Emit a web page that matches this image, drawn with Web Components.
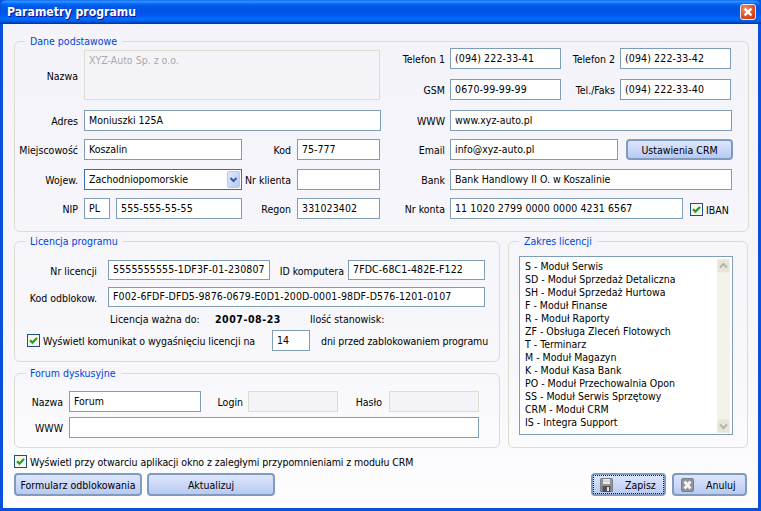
<!DOCTYPE html>
<html lang="pl"><head><meta charset="utf-8"><title>Parametry programu</title>
<style>
html,body{margin:0;padding:0;background:#0855dd}
body{font:10.5px "DejaVu Sans Condensed","DejaVu Sans",sans-serif;font-stretch:condensed;color:#000;width:761px;height:511px;overflow:hidden}
</style></head><body>
<x-app></x-app>
<script>
const FIELD_H=21;
function def(name,css,html,init){
  customElements.define(name,class extends HTMLElement{
    constructor(){super();this.attachShadow({mode:'open'});}
    connectedCallback(){
      const a=n=>this.getAttribute(n);
      this.shadowRoot.innerHTML='<style>'+css+'</style>'+(typeof html==='function'?html(a,this):html);
    }
  });
}
def('x-window',`
:host{display:flex;flex-direction:column;width:761px;height:511px;box-sizing:border-box;overflow:hidden;background:#0a50dc;border-radius:7px 7px 0 0}
.t{height:24px;flex:none;display:flex;align-items:center;justify-content:space-between;padding:0 5px 1px 7px;box-sizing:border-box;
background:linear-gradient(180deg,#0058ee 0,#3593ff 4%,#288eff 8%,#127dff 12%,#036ffc 16%,#0262ee 20%,#0057e5 28%,#0054e3 36%,#0055eb 56%,#005bf5 66%,#026afe 76%,#0062ef 86%,#0052d6 92%,#0040ab 96%,#003092 100%)}
.l{color:#fff;font:bold 12.2px "DejaVu Sans Condensed","DejaVu Sans",sans-serif;font-stretch:condensed;text-shadow:1px 1px 0 #0f1089}
.c{flex:1;margin:0 3px 3px;background:linear-gradient(180deg,#f3f3f9 0,#f6f6fb 60%,#fdfdfe 100%);padding:17px 11px 0;box-sizing:border-box;display:flex;flex-direction:column}
svg{display:block}
`,a=>`<div class="t"><span class="l">${a('caption')}</span>
<svg width="16" height="16" viewBox="0 0 16 16" aria-hidden="true"><defs><radialGradient id="r" cx=".35" cy=".3" r=".9"><stop offset="0" stop-color="#f09070"/><stop offset=".6" stop-color="#dd4c1e"/><stop offset="1" stop-color="#c23510"/></radialGradient></defs><rect x=".5" y=".5" width="15" height="15" rx="2.5" fill="url(#r)" stroke="#f5ece8"/><path d="M4.6 4.6l6.8 6.8M11.4 4.6l-6.8 6.8" stroke="#fff" stroke-width="2.3"/></svg></div><div class="c"><slot></slot></div>`);

def('x-group',`
:host{display:block;box-sizing:border-box;position:relative;border:1px solid #dbdbd0;border-radius:6px}
.lg{position:absolute;left:10px;top:-7px;padding:0 5px;line-height:13px;color:#0046d5;background:#f4f4fa;white-space:nowrap}
`,a=>`<div class="lg">${a('legend')}</div><slot></slot>`);

def('x-field',`
:host{display:flex;align-items:center;flex:none}
.lb{text-align:right;white-space:nowrap;box-sizing:border-box;flex:none;padding-top:1px}
.b{box-sizing:border-box;border:1px solid #7f9db9;background:#fff;padding:0 4px 2px 4px;display:flex;align-items:center;white-space:nowrap;overflow:hidden;flex:none}
:host([disabled]) .b{border:1px solid #dcdccf;background:#f4f4f8;color:#aaa}
:host([multi]) .b{align-items:flex-start;padding-top:3px}
:host([combo]) .b{border-color:#3c6cb4;justify-content:space-between;padding-right:1px;padding-bottom:0}
:host([combo]) span{padding-bottom:2px}
svg{display:block;flex:none}
`,a=>{
  const lw=a('lw'),g=a('gap')||6,w=a('w'),h=a('h')||FIELD_H,ls=a('ls');
  const lab=lw?`<div class="lb" style="width:${lw}px;margin-right:${g}px">${a('label')||''}</div>`:'';
  const ch=a('combo')!==null?`<svg width="13" height="17" viewBox="0 0 13 17" aria-hidden="true"><defs><linearGradient id="g" x1="0" y1="0" x2="1" y2="1"><stop offset="0" stop-color="#e3ebfd"/><stop offset="1" stop-color="#b4c8f4"/></linearGradient></defs><rect x=".5" y=".5" width="12" height="16" rx="1.5" fill="url(#g)" stroke="#b5c8ee"/><path d="M3.5 7l3 3 3-3" fill="none" stroke="#3a5a9c" stroke-width="2"/></svg>`:'';
  return lab+`<div class="b" style="width:${w}px;height:${h}px"><span${ls?` style="letter-spacing:${ls}px"`:''}>${a('value')||''}</span>${ch}</div>`;
});

def('x-check',`
:host{display:flex;align-items:center;white-space:nowrap;flex:none}
svg{display:block;flex:none;margin-right:3px}
`,a=>`<svg width="13" height="13" viewBox="0 0 13 13" aria-hidden="true"><rect x=".5" y=".5" width="12" height="12" fill="#f6f6ee" stroke="#1c5180"/><path d="M3 6.2l2.4 2.4L10 3.9" fill="none" stroke="#21a121" stroke-width="2.2"/></svg><span style="letter-spacing:${a('ls')||-0.07}px">${a('label')}</span>`);

def('x-button',`
:host{display:block;flex:none;height:23px;box-sizing:border-box;border:2px solid #7f9cbf;border-radius:4px;background:linear-gradient(180deg,#dfe6fb 0,#cbd8f8 50%,#b8c9f2 100%);position:relative}
.i{display:flex;align-items:center;justify-content:center;height:100%;white-space:nowrap;box-sizing:border-box}
:host([icon]) .i{justify-content:flex-start;padding-left:7px}
:host([focus]) .i{outline:1px dotted #222;outline-offset:-1px}
svg{display:block;margin-right:12px;flex:none}
`,a=>{
  const ic=a('icon');let s='';
  if(ic==='save')s=`<svg width="13" height="14" viewBox="0 0 13 14" aria-hidden="true"><path d="M.5 1.5a1 1 0 011-1h10a1 1 0 011 1v12H.5z" fill="#8f9296" stroke="#7c7f84"/><rect x="3" y="1" width="7" height="5" fill="#e8e8e8"/><rect x="3" y="2.5" width="7" height="1" fill="#c8c8c8"/><rect x="2.5" y="8" width="8" height="6" fill="#4e5056"/><rect x="7" y="9" width="2" height="4" fill="#e4e4e4"/></svg>`;
  if(ic==='cancel')s=`<svg width="13" height="14" viewBox="0 0 13 14" aria-hidden="true"><rect x=".5" y=".5" width="12" height="13" rx="1.5" fill="#8f9296" stroke="#7c7f84"/><path d="M3.5 3.5l6 7M9.5 3.5l-6 7" stroke="#f4f4f4" stroke-width="2.8"/></svg>`;
  return `<div class="i">${s}<span>${a('label')}</span></div>`;
});

def('x-listbox',`
:host{display:flex;box-sizing:border-box;border:1px solid #7f9db9;background:#fff}
.items{flex:1;padding:3px 0 0 5px;line-height:13px;white-space:nowrap}
.sb{width:13px;margin:2px 2px 1px 0;background:#f3f3e9;display:flex;flex-direction:column;justify-content:space-between}
svg{display:block}
`,a=>{
  const btn=d=>`<svg width="13" height="14" viewBox="0 0 13 14" aria-hidden="true"><rect x=".5" y=".5" width="12" height="13" rx="1.5" fill="#e5e5d8" stroke="#eeeee4"/><path d="${d}" fill="none" stroke="#b4b4a6" stroke-width="2"/></svg>`;
  const items=a('items').split('|').map(t=>`<div>${t}</div>`).join('');
  return `<div class="items">${items}</div><div class="sb">${btn('M3 8.5l3.5-3.5 3.5 3.5')}${btn('M3 5.5l3.5 3.5 3.5-3.5')}</div>`;
});

def('x-app',`
:host{display:block}
.sec1{width:735px;height:191px}
.g1{display:grid;grid-template-columns:380px 1fr;grid-template-rows:31px 31px 29px 30px 29px 21px;padding-top:6px}
.cell{display:flex;align-items:flex-start}
.nazwa{grid-row:1 / span 2;padding-top:2px}
.mid{display:flex;gap:8px;margin-top:9px}
.leftc{width:486px;display:flex;flex-direction:column;gap:11px;flex:none}
.lic{height:121px;padding-top:18px;box-sizing:border-box}
.row{display:flex;align-items:center}
.r2{margin-top:7px}
.info{margin-top:5px;height:14px;padding-left:95px}
.info span{display:block;flex:none}
.r4{margin-top:4px;padding-left:12px}
.forum{height:75px;padding-top:17px;box-sizing:border-box}
.zak{width:240px;height:207px;padding:14px 0 0 10px;box-sizing:border-box;flex:none}
.chk{margin-top:7px;height:13px}
.btns{margin-top:5px;display:flex}
.spacer{flex:1}
x-listbox{width:214px;height:179px}
`,()=>`<x-window caption="Parametry programu">
<x-group class="sec1" legend="Dane podstawowe"><div class="g1">
  <div class="cell nazwa"><x-field lw="63" label="Nazwa" value="XYZ-Auto Sp. z o.o." w="296" h="50" disabled multi></x-field></div>
  <div class="cell"><x-field lw="50" gap="5" label="Telefon 1" value="(094) 222-33-41" w="111" ls=".12"></x-field><x-field lw="54" gap="5" label="Telefon 2" value="(094) 222-33-42" w="111" ls=".12"></x-field></div>
  <div class="cell"><x-field lw="50" gap="5" label="GSM" value="0670-99-99-99" w="111" ls=".12"></x-field><x-field lw="54" gap="5" label="Tel./Faks" value="(094) 222-33-40" w="111" ls=".12"></x-field></div>
  <div class="cell"><x-field lw="63" label="Adres" value="Moniuszki 125A" w="297"></x-field></div>
  <div class="cell"><x-field lw="50" gap="5" label="WWW" value="www.xyz-auto.pl" w="282"></x-field></div>
  <div class="cell"><x-field lw="63" label="Miejscowość" value="Koszalin" w="158"></x-field><x-field lw="49" label="Kod" value="75-777" w="83"></x-field></div>
  <div class="cell"><x-field lw="50" gap="5" label="Email" value="info@xyz-auto.pl" w="168"></x-field><x-button label="Ustawienia CRM" style="width:107px;height:21px;margin-left:8px"></x-button></div>
  <div class="cell"><x-field lw="63" label="Wojew." value="Zachodniopomorskie" w="158" combo></x-field><x-field lw="49" label="Nr klienta" value="" w="83"></x-field></div>
  <div class="cell"><x-field lw="50" gap="5" label="Bank" value="Bank Handlowy II O. w Koszalinie" w="282"></x-field></div>
  <div class="cell"><x-field lw="63" label="NIP" value="PL" w="26"></x-field><x-field lw="0" gap="6" value="555-555-55-55" w="126" ls=".12"></x-field><x-field lw="49" label="Regon" value="331023402" w="83" ls=".12"></x-field></div>
  <div class="cell"><x-field lw="50" gap="5" label="Nr konta" value="11 1020 2799 0000 0000 4231 6567" w="233" ls=".1"></x-field><x-check label="IBAN" style="margin:5px 0 0 7px" ls="0"></x-check></div>
</div></x-group>
<div class="mid">
  <div class="leftc">
    <x-group class="lic" legend="Licencja programu">
      <div class="row"><x-field lw="82" gap="11" label="Nr licencji" value="5555555555-1DF3F-01-230807" w="162" h="20" ls=".12"></x-field><x-field lw="74" gap="4" label="ID komputera" value="7FDC-68C1-482E-F122" w="137" h="20" ls=".12"></x-field></div>
      <div class="row r2"><x-field lw="82" gap="11" label="Kod odblokow." value="F002-6FDF-DFD5-9876-0679-E0D1-200D-0001-98DF-D576-1201-0107" w="377" h="20" ls=".11"></x-field></div>
      <div class="row info"><span style="width:105px">Licencja ważna do:</span><span style="width:95px;font-weight:bold;letter-spacing:.55px">2007-08-23</span><span>Ilość stanowisk:</span></div>
      <div class="row r4"><x-check label="Wyświetl komunikat o wygaśnięciu licencji na" style="width:245px"></x-check><x-field value="14" w="38"></x-field><span style="margin-left:11px;white-space:nowrap;letter-spacing:-.08px">dni przed zablokowaniem programu</span></div>
    </x-group>
    <x-group class="forum" legend="Forum dyskusyjne">
      <div class="row"><x-field lw="48" label="Nazwa" value="Forum" w="132"></x-field><x-field lw="42" gap="5" label="Login" value="" w="90" disabled></x-field><x-field lw="44" gap="7" label="Hasło" value="" w="90" disabled></x-field></div>
      <div class="row" style="margin-top:5px"><x-field lw="48" label="WWW" value="" w="410"></x-field></div>
    </x-group>
  </div>
  <x-group class="zak" legend="Zakres licencji"><x-listbox items="S - Moduł Serwis|SD - Moduł Sprzedaż Detaliczna|SH - Moduł Sprzedaż Hurtowa|F - Moduł Finanse|R - Moduł Raporty|ZF - Obsługa Zleceń Flotowych|T - Terminarz|M - Moduł Magazyn|K - Moduł Kasa Bank|PO - Moduł Przechowalnia Opon|SS - Moduł Serwis Sprzętowy|CRM - Moduł CRM|IS - Integra Support"></x-listbox></x-group>
</div>
<x-check class="chk" label="Wyświetl przy otwarciu aplikacji okno z zaległymi przypomnieniami z modułu CRM"></x-check>
<div class="btns"><x-button label="Formularz odblokowania" style="width:128px"></x-button><x-button label="Aktualizuj" style="width:128px;margin-left:5px"></x-button><div class="spacer"></div><x-button icon="save" label="Zapisz" focus style="width:75px"></x-button><x-button icon="cancel" label="Anuluj" style="width:75px;margin-left:6px"></x-button></div>
</x-window>`);
</script>
</body></html>
